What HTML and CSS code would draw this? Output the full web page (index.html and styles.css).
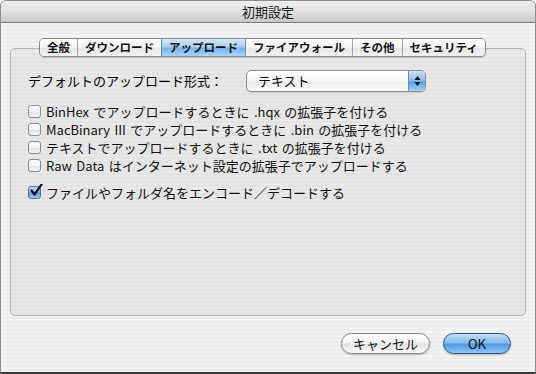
FILE: index.html
```html
<!DOCTYPE html>
<html lang="ja">
<head>
<meta charset="utf-8">
<title>初期設定</title>
<link rel="stylesheet" href="styles.css">
</head>
<body>
<div class="window">
  <div class="titlebar">初期設定</div>
  <div class="content">
    <div class="tabs">
      <div class="tab">全般</div>
      <div class="tab">ダウンロード</div>
      <div class="tab selected">アップロード</div>
      <div class="tab">ファイアウォール</div>
      <div class="tab">その他</div>
      <div class="tab">セキュリティ</div>
    </div>
    <div class="tabbox">
      <div class="formrow">
        <span class="label">デフォルトのアップロード形式：</span>
        <div class="popup">
          <span class="popup-text">テキスト</span>
          <span class="popup-arrows">
            <svg width="7" height="12" viewBox="0 0 7 12"><path d="M3.5 1 L6.5 5 L0.5 5 Z" fill="#111"/><path d="M3.5 11 L6.5 7 L0.5 7 Z" fill="#111"/></svg>
          </span>
        </div>
      </div>
      <div class="checks">
        <label class="check"><span class="box"></span>BinHex でアップロードするときに .hqx の拡張子を付ける</label>
        <label class="check"><span class="box"></span>MacBinary III でアップロードするときに .bin の拡張子を付ける</label>
        <label class="check"><span class="box"></span>テキストでアップロードするときに .txt の拡張子を付ける</label>
        <label class="check"><span class="box"></span>Raw Data はインターネット設定の拡張子でアップロードする</label>
      </div>
      <label class="check single"><span class="box on"><svg width="14" height="14" viewBox="0 0 14 14"><path d="M2.5 6.5 L5.5 10.5 L12.5 0.5" fill="none" stroke="#0c1630" stroke-width="2.2" stroke-linecap="round" stroke-linejoin="round"/></svg></span>ファイルやフォルダ名をエンコード／デコードする</label>
    </div>
    <div class="buttons">
      <div class="btn">キャンセル</div>
      <div class="btn default">OK</div>
    </div>
  </div>
</div>
</body>
</html>
```

FILE: styles.css
```css
* { box-sizing: border-box; }
html, body { margin: 0; padding: 0; background: #ffffff; }
body { width: 536px; height: 374px; overflow: hidden; font-family: "Noto Sans CJK JP", "Liberation Sans", sans-serif; color: #000; }

.window {
  width: 536px;
  height: 374px;
  border: 1px solid #8d8d8d;
  border-bottom: 2px solid #3c3c3c;
  border-radius: 6px 6px 0 0;
  background: repeating-linear-gradient(to bottom, #ececec 0, #ececec 2px, #f3f3f3 2px, #f3f3f3 4px);
  display: flex;
  flex-direction: column;
  overflow: hidden;
}

.titlebar {
  height: 22px;
  flex: none;
  border-bottom: 1px solid #7e7e7e;
  background: linear-gradient(to bottom, #eeeeee 0%, #e0e0e0 50%, #c8c8c8 100%);
  text-align: center;
  font-size: 13px;
  line-height: 22px;
  color: #1a1a1a;
}

.content {
  flex: 1;
  padding: 15px 9px 0 9px;
  display: flex;
  flex-direction: column;
}

.tabs {
  display: flex;
  margin-left: 29px;
  height: 19px;
  margin-bottom: -9px;
  position: relative;
  z-index: 1;
  align-self: flex-start;
  border: 1px solid #8a8a8a;
  border-radius: 5px;
  overflow: hidden;
  box-shadow: 0 1px 1px rgba(0,0,0,0.15);
}

.tab {
  font-size: 11.5px;
  font-weight: bold;
  line-height: 17px;
  padding: 0 7px;
  background: linear-gradient(to bottom, #ffffff 0%, #f4f4f4 50%, #e6e6e6 51%, #f2f2f2 100%);
  border-left: 1px solid #a6a6a6;
  color: #111;
}
.tab:first-child { border-left: none; }
.tab.selected {
  background: linear-gradient(to bottom, #d4e8fa 0%, #a9d0f3 45%, #75b4ec 55%, #a8d6fb 100%);
  border-left-color: #6b8bb0;
  border-right: 1px solid #6b8bb0;
}
.tab.selected + .tab { border-left: none; }

.tabbox {
  height: 268px;
  border: 1px solid #b4b4b4;
  border-radius: 5px;
  background: repeating-linear-gradient(to bottom, #e3e3e3 0, #e3e3e3 2px, #e8e8e8 2px, #e8e8e8 4px);
  padding: 20px 0 0 17px;
}

.formrow {
  display: flex;
  align-items: center;
  height: 23px;
}
.label { font-size: 13px; width: 218px; }
.popup {
  width: 180px;
  height: 22px;
  border: 1px solid #8f8f8f;
  border-radius: 5px;
  background: linear-gradient(to bottom, #ffffff 0%, #f6f6f6 50%, #ececec 55%, #fbfbfb 100%);
  display: flex;
  align-items: center;
  overflow: hidden;
  box-shadow: 0 1px 1px rgba(0,0,0,0.12);
}
.popup-text { flex: 1; font-size: 13px; padding-left: 11px; }
.popup-arrows {
  width: 17px;
  height: 100%;
  background: linear-gradient(to bottom, #c9e1f7 0%, #8ebfee 45%, #5ea2e4 55%, #9fd0fb 100%);
  border-left: 1px solid #6e8cb0;
  display: flex;
  align-items: center;
  justify-content: center;
}

.checks { margin-top: 10px; display: flex; flex-direction: column; }
.check {
  display: flex;
  align-items: center;
  height: 18px;
  font-size: 13px;
  color: #111;
  word-spacing: 1.5px;
}
.check.single { margin-top: 9px; }
.box {
  width: 13px;
  height: 13px;
  border: 1px solid #8c8c8c;
  border-radius: 3px;
  background: linear-gradient(to bottom, #ffffff 0%, #f3f3f3 50%, #e2e2e2 55%, #f8f8f8 100%);
  margin-right: 5px;
  flex: none;
  position: relative;
}
.box.on {
  background: linear-gradient(to bottom, #c6e0f8 0%, #89bdee 45%, #5ba0e4 55%, #9fd0fb 100%);
  border-color: #55739a;
}
.box.on svg { position: absolute; left: 0; top: -3px; }

.buttons {
  display: flex;
  justify-content: flex-end;
  gap: 13px;
  padding: 17px 15px 0 0;
}
.btn {
  height: 21px;
  border-radius: 11px;
  border: 1px solid #8a8a8a;
  background: linear-gradient(to bottom, #ffffff 0%, #f4f4f4 45%, #e4e4e4 55%, #fafafa 100%);
  font-size: 13px;
  line-height: 19px;
  text-align: center;
  width: 89px;
  box-shadow: 0 1px 2px rgba(0,0,0,0.25);
  color: #111;
}
.btn.default {
  width: 68px;
  border-color: #2f4f8e;
  background: linear-gradient(to bottom, #c4def8 0%, #86bbee 45%, #4f98e2 55%, #8cc8fb 100%);
}
```
